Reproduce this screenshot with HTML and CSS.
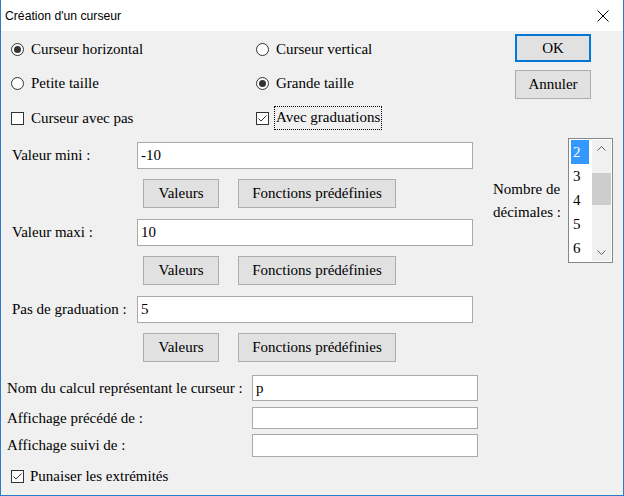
FILE: index.html
```html
<!DOCTYPE html>
<html lang="fr">
<head>
  <meta charset="UTF-8" />
  <title>Création d'un curseur</title>
  <link rel="stylesheet" href="styles.css">
</head>
<body>
  <div class="window">
    <div class="titlebar">
      <span class="title">Création d'un curseur</span>
      <span class="close">
        <svg width="12" height="12" viewBox="0 0 12 12"><path d="M0.5 0.5L11.5 11.5M11.5 0.5L0.5 11.5" stroke="#000" stroke-width="1" fill="none"/></svg>
      </span>
    </div>

    <div class="content">
      <div class="top">
        <div class="options">
          <label class="opt"><span class="radio checked"></span>Curseur horizontal</label>
          <label class="opt"><span class="radio"></span>Curseur vertical</label>
          <label class="opt"><span class="radio"></span>Petite taille</label>
          <label class="opt"><span class="radio checked"></span>Grande taille</label>
          <label class="opt"><span class="check"></span>Curseur avec pas</label>
          <label class="opt">
            <span class="check"><svg width="11" height="11" viewBox="0 0 11 11"><polyline points="1.5,5.5 4,8 9.5,2.5" stroke="#333" stroke-width="1" fill="none"/></svg></span>
            <span class="focused">Avec graduations</span>
          </label>
        </div>
        <div class="actions">
          <button class="btn default">OK</button>
          <button class="btn">Annuler</button>
        </div>
      </div>

      <div class="middle">
        <div class="fields">
          <div class="field"><span>Valeur mini :</span><input class="text" type="text" value="-10"></div>
          <div class="field-buttons"><button class="btn small">Valeurs</button><button class="btn wide">Fonctions prédéfinies</button></div>
          <div class="field"><span>Valeur maxi :</span><input class="text" type="text" value="10"></div>
          <div class="field-buttons"><button class="btn small">Valeurs</button><button class="btn wide">Fonctions prédéfinies</button></div>
          <div class="field"><span>Pas de graduation :</span><input class="text" type="text" value="5"></div>
          <div class="field-buttons"><button class="btn small">Valeurs</button><button class="btn wide">Fonctions prédéfinies</button></div>
        </div>

        <div class="decimals">
          <span class="dec-label">Nombre de décimales :</span>
          <div class="listbox">
            <ul class="items">
              <li class="selected">2</li>
              <li>3</li>
              <li>4</li>
              <li>5</li>
              <li>6</li>
            </ul>
            <div class="scrollbar">
              <span class="arrow"><svg width="9" height="5" viewBox="0 0 9 5"><polyline points="0.5,4.5 4.5,0.5 8.5,4.5" stroke="#606060" fill="none"/></svg></span>
              <span class="track"><span class="thumb"></span></span>
              <span class="arrow"><svg width="9" height="5" viewBox="0 0 9 5"><polyline points="0.5,0.5 4.5,4.5 8.5,0.5" stroke="#606060" fill="none"/></svg></span>
            </div>
          </div>
        </div>
      </div>

      <div class="bottom">
        <div class="row first"><span>Nom du calcul représentant le curseur :</span><input class="text" type="text" value="p"></div>
        <div class="row second"><span>Affichage précédé de :</span><input class="text" type="text" value=""></div>
        <div class="row third"><span>Affichage suivi de :</span><input class="text" type="text" value=""></div>
        <label class="opt pin">
          <span class="check"><svg width="11" height="11" viewBox="0 0 11 11"><polyline points="1.5,5.5 4,8 9.5,2.5" stroke="#333" stroke-width="1" fill="none"/></svg></span>
          Punaiser les extrémités
        </label>
      </div>
    </div>
  </div>
</body>
</html>
```

FILE: styles.css
```css
* { box-sizing: border-box; margin: 0; padding: 0; }
body {
  background: #fff;
  font-family: 'Liberation Serif', 'Times New Roman', serif;
  font-size: 15px;
  color: #000;
}
.window {
  width: 624px;
  height: 496px;
  border: 1px solid #2b7bc9;
  border-top: none;
  display: flex;
  flex-direction: column;
}
.titlebar {
  height: 31px;
  background: #fff;
  display: flex;
  align-items: center;
  padding-left: 4px;
}
.title {
  font-family: 'Segoe UI', 'Liberation Sans', sans-serif;
  font-size: 12.2px;
  margin-top: 1px;
}
.close { margin-left: auto; margin-right: 14px; display: flex; margin-top: 0; }
.content {
  flex: 1;
  background: #f0f0f0;
}

/* options + OK / Annuler */
.top { display: flex; height: 106px; }
.options {
  display: grid;
  grid-template-columns: 245px auto;
  grid-template-rows: 34px 34px 36px;
  padding: 1px 0 0 10px;
}
.opt { display: flex; align-items: center; gap: 7px; white-space: nowrap; }
.radio, .check {
  width: 13px;
  height: 13px;
  border: 1px solid #333;
  background: #fff;
  display: flex;
  align-items: center;
  justify-content: center;
  flex: none;
}
.radio { border-radius: 50%; }
.radio.checked::after {
  content: '';
  width: 7px;
  height: 7px;
  border-radius: 50%;
  background: #333;
}
.check svg { display: block; }
.focused { outline: 1px dotted #000; padding: 2px 1px 3px 1px; margin-left: -1px; }
.actions {
  margin-left: auto;
  margin-right: 32px;
  padding-top: 3px;
  display: flex;
  flex-direction: column;
  gap: 8px;
}
.btn {
  font-family: inherit;
  font-size: 15px;
  color: #000;
  background: #e1e1e1;
  border: 1px solid #adadad;
  width: 76px;
  height: 29px;
}
.btn.default { border: 2px solid #0078d7; height: 28px; }
.btn.wide { width: 158px; }

/* value fields */
.middle { display: flex; }
.fields { width: 480px; padding: 5px 0 0 11px; }
.field {
  display: grid;
  grid-template-columns: 125px 336px;
  align-items: center;
  height: 27px;
}
.text {
  font-family: inherit;
  font-size: 15px;
  color: #000;
  background: #fff;
  border: 1px solid #a9a9a9;
  padding: 0 3px;
  height: 100%;
  outline: none;
}
.field-buttons {
  display: flex;
  gap: 19px;
  padding-left: 131px;
  margin: 10px 0 11px;
}
.fields .field-buttons:last-child { margin-bottom: 0; }

/* decimals list */
.decimals {
  display: flex;
  align-items: center;
  align-self: flex-start;
  margin: 1px 0 0 12px;
}
.dec-label { width: 75px; line-height: 23px; }
.listbox {
  width: 45px;
  height: 125px;
  border: 1px solid #828790;
  background: #fff;
  padding: 1px;
  display: flex;
  overflow: hidden;
}
.items { list-style: none; width: 22px; padding-left: 1px; }
.items li { width: 18px; height: 24px; line-height: 24px; padding-left: 2px; }
.items li.selected { background: #3399ff; color: #fff; }
.scrollbar {
  width: 19px;
  background: #f0f0f0;
  display: flex;
  flex-direction: column;
}
.arrow { height: 17px; display: flex; align-items: center; justify-content: center; }
.track { flex: 1; }
.thumb { display: block; height: 32px; margin-top: 16px; background: #cdcdcd; }

/* bottom rows */
.bottom { padding: 13px 0 0 6px; }
.row {
  display: grid;
  grid-template-columns: 245px 226px;
  align-items: center;
}
.row.first { height: 26px; margin-bottom: 6px; }
.row.second { height: 22px; margin-bottom: 5px; }
.row.third { height: 23px; }
.pin { margin: 8px 0 0 4px; height: 23px; gap: 6px; }
```
